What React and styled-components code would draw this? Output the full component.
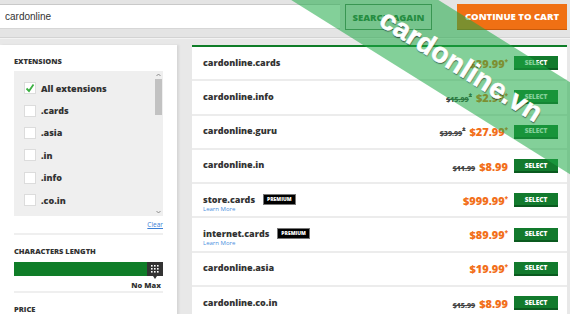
import React from 'react';
import styled, { createGlobalStyle } from 'styled-components';

const GlobalStyle = createGlobalStyle`
  html, body {
    margin: 0;
    padding: 0;
    background: #e8e8e8;
    font-family: "Open Sans", "Liberation Sans", sans-serif;
    color: #333;
  }
`;

const Page = styled.div`
  position: relative;
  width: 570px;
  height: 314px;
  overflow: hidden;
`;

const Header = styled.header`
  display: flex;
  align-items: flex-start;
  height: 38px;
  box-sizing: border-box;
  padding-top: 4px;
  background: #e4e4e4;
  border-bottom: 1px solid #d3d3d3;
  box-shadow: 0 1px 0 #f3f3f3;
`;

const SearchInput = styled.input`
  width: 340px;
  height: 25px;
  box-sizing: border-box;
  margin: 0;
  padding: 0 5px;
  border: none;
  border-top: 1px solid #c9c9c9;
  border-bottom: 1px solid #d6d6d6;
  background: #fff;
  font: 10px "Liberation Sans", Arial, sans-serif;
  color: #333;
  outline: none;
`;

const SearchButton = styled.button`
  width: 87px;
  height: 26px;
  margin-left: 5px;
  padding: 0;
  border: 1px solid #5b7f63;
  background: transparent;
  color: #2f6a3d;
  font: 800 9.5px "Open Sans", sans-serif;
`;

const CartButton = styled.button`
  width: 110px;
  height: 26px;
  margin-left: auto;
  margin-right: 3px;
  padding: 0;
  border: none;
  border-bottom: 1px solid #c75a0c;
  background: #f07014;
  color: #fff;
  font: 800 9.5px "Open Sans", sans-serif;
`;

const Main = styled.div`
  display: flex;
  padding-top: 7px;
`;

const Sidebar = styled.aside`
  width: 177px;
  min-height: 269px;
  box-sizing: border-box;
  padding: 10px 14px 0 14px;
  background: #fff;
  box-shadow: 2px 0 2px rgba(0, 0, 0, 0.08);
`;

const SectionTitle = styled.div`
  font-size: 7.5px;
  font-weight: 800;
  line-height: 12px;
  color: #333;
  text-transform: uppercase;
  margin-top: ${p => p.$top || 0}px;
`;

const ExtBox = styled.div`
  display: flex;
  height: 145px;
  margin-top: 4px;
  background: #efefef;
`;

const ExtList = styled.div`
  flex: 1;
  padding-top: 6px;
`;

const ExtItem = styled.div`
  display: flex;
  align-items: center;
  height: 22.4px;
  padding-left: 10px;
  font-size: 9px;
  font-weight: 800;
  color: #333;
`;

const CheckBox = styled.span`
  display: flex;
  align-items: center;
  justify-content: center;
  width: 12px;
  height: 12px;
  margin-right: 5px;
  box-sizing: border-box;
  background: #fff;
  border: 1px solid #dcdcdc;
`;

const ScrollBar = styled.div`
  display: flex;
  flex-direction: column;
  align-items: center;
  width: 8px;
  margin-right: 1px;
`;

const ScrollArrow = styled.div`
  height: 8px;
  display: flex;
  align-items: center;
  margin-top: ${p => (p.$bottom ? 'auto' : '0')};
`;

const ScrollThumb = styled.div`
  width: 7px;
  height: 36px;
  background: #c2c2c2;
`;

const ClearLink = styled.a`
  display: block;
  text-align: right;
  margin-top: 4px;
  font-size: 6.5px;
  color: #3b7fd6;
  text-decoration: underline;
  line-height: 9px;
`;

const Divider = styled.div`
  margin-top: ${p => p.$top || 0}px;
  border-top: 2px solid #efefef;
`;

const Slider = styled.div`
  display: flex;
  height: 14px;
  margin-top: 5px;
  background: #0f7d28;
`;

const Handle = styled.div`
  position: relative;
  width: 16px;
  margin-left: auto;
  display: flex;
  align-items: center;
  justify-content: center;
  background: #333;

  &::after {
    content: '';
    position: absolute;
    left: 6px;
    bottom: -3px;
    border-left: 2px solid transparent;
    border-right: 2px solid transparent;
    border-top: 3px solid #333;
  }
`;

const NoMax = styled.div`
  margin-top: 4px;
  text-align: right;
  padding-right: 2px;
  font-size: 7.5px;
  font-weight: 800;
  line-height: 10px;
`;

const Results = styled.section`
  flex: 1;
  margin-left: 15px;
  margin-right: 3px;
  background: #fff;
  border-top: 2px solid #0f7d28;
`;

const Row = styled.div`
  display: flex;
  align-items: center;
  height: 34.3px;
  box-sizing: border-box;
  padding: 0 9px 0 11px;
  border-bottom: 2px solid #ececec;
`;

const NameCol = styled.div`
  align-self: stretch;
  flex: 1;
  padding-top: 9px;
`;

const NameLine = styled.div`
  display: flex;
  align-items: center;
  height: 12px;
  font-size: 9px;
  font-weight: 800;
  color: #333;
`;

const Badge = styled.span`
  margin-left: 8px;
  padding: 1px 3px;
  background: #000;
  border: 1px solid #777;
  color: #fff;
  font-size: 5px;
  font-weight: 800;
  line-height: 7px;
`;

const LearnMore = styled.a`
  display: block;
  font-size: 6px;
  line-height: 8px;
  color: #4a8fe0;
`;

const PriceBox = styled.div`
  display: flex;
  align-items: baseline;
`;

const OldPrice = styled.span`
  margin-right: 4px;
  font-size: 7px;
  font-weight: 800;
  color: #444;
  text-decoration: line-through;
`;

const NewPrice = styled.span`
  font-size: 11px;
  font-weight: 800;
  color: #f26f1a;
`;

const Star = styled.sup`
  font-size: 6px;
  vertical-align: 4px;
  color: ${p => p.$color || '#f26f1a'};
`;

const SelectButton = styled.button`
  width: 44px;
  height: 14px;
  margin-left: 6px;
  padding: 0;
  border: none;
  border-bottom: 2px solid #0a5a1f;
  background: #127a2d;
  color: #fff;
  font: 800 6.5px "Open Sans", sans-serif;
`;

/* diagonal watermark band lying over the whole page */
const Watermark = styled.div`
  position: absolute;
  left: -10px;
  top: 8px;
  width: 900px;
  height: 78px;
  display: flex;
  align-items: center;
  justify-content: center;
  padding-left: 56px;
  box-sizing: border-box;
  background: rgba(30, 170, 70, 0.55);
  transform: rotate(32deg);
  pointer-events: none;
`;

const WatermarkText = styled.span`
  margin-top: 10px;
  font: 700 28px "Liberation Sans", Arial, sans-serif;
  letter-spacing: 0.3px;
  color: #fff;
  -webkit-text-stroke: 0.6px #fff;
  text-shadow: 1px 1px 1px rgba(0, 0, 0, 0.55);
`;

const extensions = ['All extensions', '.cards', '.asia', '.in', '.info', '.co.in'];

const domains = [
  { name: 'cardonline.cards', price: '$39.99', star: true },
  { name: 'cardonline.info', old: '$15.99', oldStar: true, price: '$2.99', star: true },
  { name: 'cardonline.guru', old: '$39.99', oldStar: true, price: '$27.99', star: true },
  { name: 'cardonline.in', old: '$11.99', price: '$8.99' },
  { name: 'store.cards', premium: true, price: '$999.99', star: true },
  { name: 'internet.cards', premium: true, price: '$89.99', star: true },
  { name: 'cardonline.asia', price: '$19.99', star: true },
  { name: 'cardonline.co.in', old: '$15.99', price: '$8.99' },
];

const Check = () => (
  <svg width="10" height="10" viewBox="0 0 10 10">
    <path d="M1.5 5.5 L4 8 L8.5 1.5" fill="none" stroke="#3cb043" strokeWidth="1.8" />
  </svg>
);

const Dots = () => (
  <svg width="8" height="8" viewBox="0 0 8 8">
    {[0, 1, 2].map(r =>
      [0, 1, 2].map(c => (
        <rect key={`${r}${c}`} x={c * 3} y={r * 3} width="1.6" height="1.6" fill="#fff" />
      ))
    )}
  </svg>
);

const Arrow = ({ up }) => (
  <svg width="5" height="4" viewBox="0 0 5 4">
    <path d={up ? 'M0.5 3 L2.5 1 L4.5 3' : 'M0.5 1 L2.5 3 L4.5 1'} fill="none" stroke="#777" strokeWidth="0.8" />
  </svg>
);

export default function App() {
  return (
    <Page>
      <GlobalStyle />
      <Header>
        <SearchInput defaultValue="cardonline" readOnly />
        <SearchButton>SEARCH AGAIN</SearchButton>
        <CartButton>CONTINUE TO CART</CartButton>
      </Header>
      <Main>
        <Sidebar>
          <SectionTitle>Extensions</SectionTitle>
          <ExtBox>
            <ExtList>
              {extensions.map((ext, i) => (
                <ExtItem key={ext}>
                  <CheckBox>{i === 0 && <Check />}</CheckBox>
                  {ext}
                </ExtItem>
              ))}
            </ExtList>
            <ScrollBar>
              <ScrollArrow><Arrow up /></ScrollArrow>
              <ScrollThumb />
              <ScrollArrow $bottom><Arrow /></ScrollArrow>
            </ScrollBar>
          </ExtBox>
          <ClearLink>Clear</ClearLink>
          <Divider $top={4} />
          <SectionTitle $top={10}>Characters Length</SectionTitle>
          <Slider>
            <Handle><Dots /></Handle>
          </Slider>
          <NoMax>No Max</NoMax>
          <Divider $top={1} />
          <SectionTitle $top={10}>Price</SectionTitle>
        </Sidebar>
        <Results>
          {domains.map(d => (
            <Row key={d.name}>
              <NameCol>
                <NameLine>
                  {d.name}
                  {d.premium && <Badge>PREMIUM</Badge>}
                </NameLine>
                {d.premium && <LearnMore>Learn More</LearnMore>}
              </NameCol>
              <PriceBox>
                {d.old && (
                  <OldPrice>
                    {d.old}
                    {d.oldStar && <Star $color="#444">*</Star>}
                  </OldPrice>
                )}
                <NewPrice>
                  {d.price}
                  {d.star && <Star>*</Star>}
                </NewPrice>
              </PriceBox>
              <SelectButton>SELECT</SelectButton>
            </Row>
          ))}
        </Results>
      </Main>
      <Watermark>
        <WatermarkText>cardonline.vn</WatermarkText>
      </Watermark>
    </Page>
  );
}
